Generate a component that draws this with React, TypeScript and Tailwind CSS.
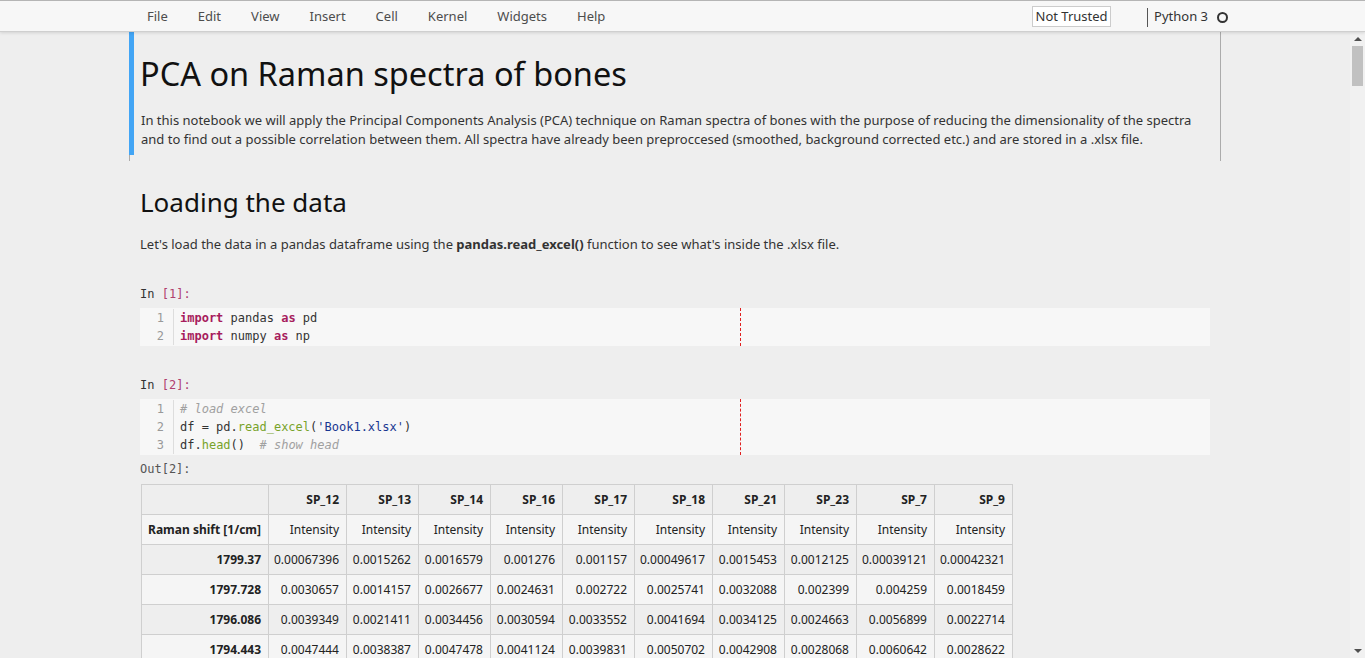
import React from "react";

const SANS = "font-[family-name:'Noto_Sans','Open_Sans',sans-serif]";
const MONO = "font-[family-name:'DejaVu_Sans_Mono','Liberation_Mono',monospace]";

const cols = ["SP_12", "SP_13", "SP_14", "SP_16", "SP_17", "SP_18", "SP_21", "SP_23", "SP_7", "SP_9"];
const colW = [78, 72, 72, 72, 72, 78, 72, 72, 78, 78];
const rows: [string, string[]][] = [
  ["1799.37", ["0.00067396", "0.0015262", "0.0016579", "0.001276", "0.001157", "0.00049617", "0.0015453", "0.0012125", "0.00039121", "0.00042321"]],
  ["1797.728", ["0.0030657", "0.0014157", "0.0026677", "0.0024631", "0.002722", "0.0025741", "0.0032088", "0.002399", "0.004259", "0.0018459"]],
  ["1796.086", ["0.0039349", "0.0021411", "0.0034456", "0.0030594", "0.0033552", "0.0041694", "0.0034125", "0.0024663", "0.0056899", "0.0022714"]],
  ["1794.443", ["0.0047444", "0.0038387", "0.0047478", "0.0041124", "0.0039831", "0.0050702", "0.0042908", "0.0028068", "0.0060642", "0.0028622"]],
];

const KW = "text-[#a71d5d] font-bold";
const STR = "text-[#183691]";
const FN = "text-[#77a32a]";
const CMT = "text-[#a0a0a0] italic";

function CodeBox({ lines }: { lines: React.ReactNode[] }) {
  return (
    <div className={`relative flex bg-[#f7f7f7] py-px ${MONO} text-[12px] leading-[18px]`}>
      <div className="w-[34px] border-r border-[#dddddd] pr-[9px] text-right text-[#999999]">
        {lines.map((_, i) => (
          <div key={i}>{i + 1}</div>
        ))}
      </div>
      <div className="pl-[6px] text-[#333333] whitespace-pre">
        {lines.map((l, i) => (
          <div key={i}>{l}</div>
        ))}
      </div>
      <div className="absolute top-0 bottom-0 left-[600px] border-l border-dashed border-[#e02020]" />
    </div>
  );
}

function Prompt({ n }: { n: number }) {
  return (
    <div className={`${MONO} text-[12px] leading-[18px] text-[#333333]`}>
      In <span className="text-[#b0406e]">[{n}]:</span>
    </div>
  );
}

export default function App() {
  const menu = ["File", "Edit", "View", "Insert", "Cell", "Kernel", "Widgets", "Help"];
  return (
    <div className={`w-[1365px] h-[658px] overflow-hidden bg-[#eeeeee] ${SANS}`}>
      {/* header */}
      <div className="relative z-10 h-[32px] pt-[2px] border-t border-[#b5b5b5] border-b border-b-[#cfcfcf] bg-[#f7f7f7] shadow-[0_1px_3px_rgba(0,0,0,0.12)] flex items-center pl-[147px] pr-[137px]">
        <div className="flex gap-[30px] text-[13px] text-[#4d4d4d]">
          {menu.map((m) => (
            <span key={m}>{m}</span>
          ))}
        </div>
        <div className="ml-auto flex items-center">
          <div className="mt-[-2px] h-[21px] w-[79px] border border-[#cccccc] bg-white text-[13px] leading-[19px] text-[#333333] text-center">
            Not Trusted
          </div>
          <div className="ml-[36px] h-[19px] w-px bg-[#555555]" />
          <span className="ml-[6px] text-[13px] text-[#333333]">Python 3</span>
          <span className="ml-[9px] w-[11px] h-[11px] rounded-full border-[2px] border-[#333333]" />
        </div>
      </div>

      {/* site */}
      <div className="flex h-[626px]">
        <div className="flex-1 overflow-hidden">
          <div className="ml-[129px] w-[1092px]">
            {/* cell 1 selected */}
            <div className="relative h-[129px] border-x border-[#ababab]">
              <div className="absolute left-[-1px] top-0 bottom-[6px] w-[5px] bg-[#42a5f5]" />
              <div className="pl-[10px] pr-[20px] pt-[20px]">
                <h1 className="text-[32.5px] leading-[44px] text-[#111111]">PCA on Raman spectra of bones</h1>
                <p className="mt-[15px] ml-px text-[13px] leading-[19px] text-[#333333]">
                  In this notebook we will apply the Principal Components Analysis (PCA) technique on Raman spectra of bones with the purpose of reducing the dimensionality of the spectra and to find out a possible correlation between them. All spectra have already been preproccesed (smoothed, background corrected etc.) and are stored in a .xlsx file.
                </p>
              </div>
            </div>

            {/* cell 2 markdown */}
            <div className="pl-[11px] pt-[24px]">
              <h2 className="text-[26px] leading-[34px] text-[#111111]">Loading the data</h2>
              <p className="mt-[16px] text-[13px] leading-[19px] text-[#333333]">
                Let's load the data in a pandas dataframe using the <b>pandas.read_excel()</b> function to see what's inside the .xlsx file.
              </p>
            </div>

            {/* code cell 1 */}
            <div className="pl-[11px] pr-[11px] mt-[31px]">
              <Prompt n={1} />
              <div className="mt-[5px]">
                <CodeBox
                  lines={[
                    <><span className={KW}>import</span> pandas <span className={KW}>as</span> pd</>,
                    <><span className={KW}>import</span> numpy <span className={KW}>as</span> np</>,
                  ]}
                />
              </div>
            </div>

            {/* code cell 2 */}
            <div className="pl-[11px] pr-[11px] mt-[30px]">
              <Prompt n={2} />
              <div className="mt-[5px]">
                <CodeBox
                  lines={[
                    <span className={CMT}># load excel</span>,
                    <>df = pd.<span className={FN}>read_excel</span>(<span className={STR}>'Book1.xlsx'</span>)</>,
                    <>df.<span className={FN}>head</span>()  <span className={CMT}># show head</span></>,
                  ]}
                />
              </div>
              <div className={`mt-[5px] ${MONO} text-[12px] leading-[18px] text-[#555555]`}>Out[2]:</div>
              <table className="mt-[6px] ml-px table-fixed border-collapse text-[12px] text-[#222222]" style={{ width: 872 }}>
                <colgroup>
                  <col style={{ width: 127 }} />
                  {colW.map((w, i) => (
                    <col key={i} style={{ width: w }} />
                  ))}
                </colgroup>
                <thead>
                  <tr className="h-[30px] bg-[#eeeeee]">
                    <th className="border border-[#cfcfcf]" />
                    {cols.map((c) => (
                      <th key={c} className="border border-[#cfcfcf] pr-[7px] text-right font-bold">{c}</th>
                    ))}
                  </tr>
                  <tr className="h-[30px] bg-[#f5f5f5]">
                    <th className="border border-[#cfcfcf] pr-[7px] text-right font-bold">Raman shift [1/cm]</th>
                    {cols.map((c) => (
                      <td key={c} className="border border-[#cfcfcf] pr-[7px] text-right">Intensity</td>
                    ))}
                  </tr>
                </thead>
                <tbody>
                  {rows.map(([idx, vals], r) => (
                    <tr key={idx} className={`h-[30px] ${r % 2 === 0 ? "bg-[#eeeeee]" : "bg-[#f5f5f5]"}`}>
                      <th className="border border-[#cfcfcf] pr-[7px] text-right font-bold">{idx}</th>
                      {vals.map((v, i) => (
                        <td key={i} className="border border-[#cfcfcf] pr-[7px] text-right whitespace-nowrap">{v}</td>
                      ))}
                    </tr>
                  ))}
                </tbody>
              </table>
            </div>
          </div>
        </div>

        {/* scrollbar */}
        <div className="w-[15px] bg-[#f1f1f1] flex flex-col items-center">
          <div className="h-[14px] flex items-center justify-center">
            <div className="w-0 h-0 border-l-[4px] border-r-[4px] border-b-[4px] border-l-transparent border-r-transparent border-b-[#505050]" />
          </div>
          <div className="w-[11px] h-[40px] bg-[#c1c1c1]" />
          <div className="flex-1" />
          <div className="h-[14px] flex items-center justify-center">
            <div className="w-0 h-0 border-l-[4px] border-r-[4px] border-t-[4px] border-l-transparent border-r-transparent border-t-[#505050]" />
          </div>
        </div>
      </div>
    </div>
  );
}
